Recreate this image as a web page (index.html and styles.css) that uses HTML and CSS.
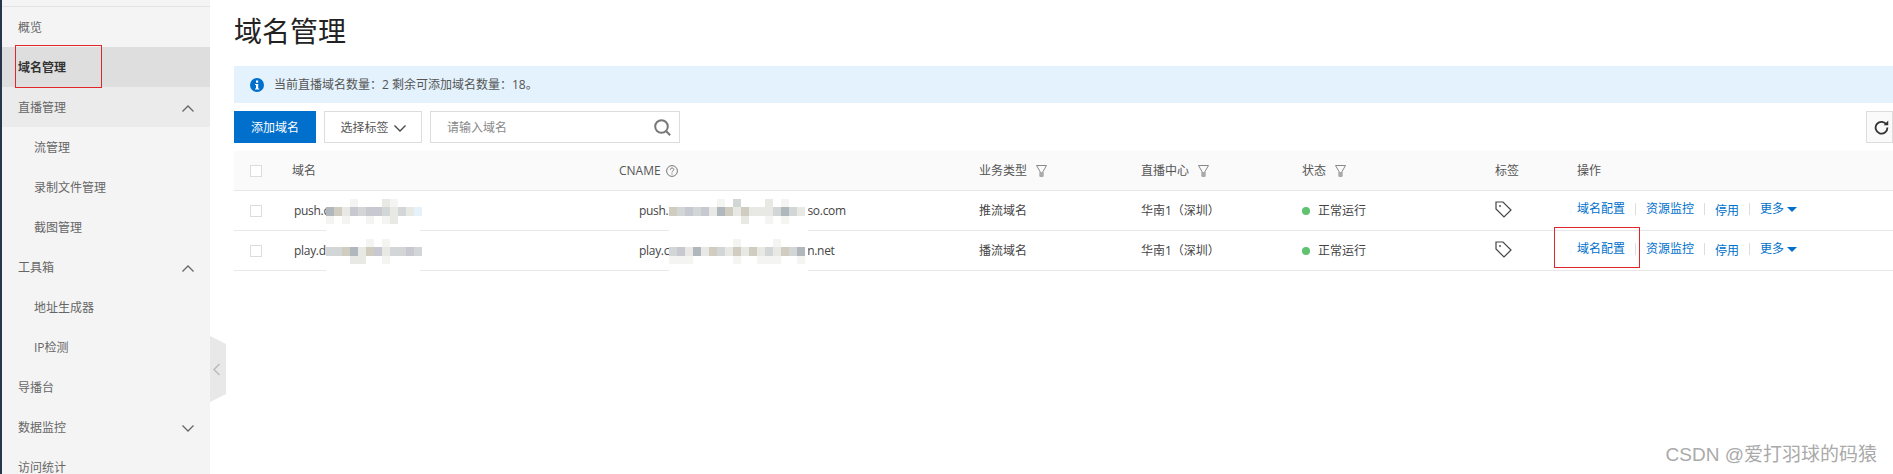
FILE: index.html
```html
<!DOCTYPE html>
<html lang="zh-CN">
<head>
<meta charset="utf-8">
<title>域名管理</title>
<link rel="stylesheet" href="styles.css">
</head>
<body>
<div class="edge"></div>
<aside class="sidebar">
  <div class="nav-item">概览</div>
  <div class="nav-item active">域名管理</div>
  <div class="nav-item open">直播管理<svg class="chev" viewBox="0 0 12 7"><path d="M0.5 6.5 6 1l5.5 5.5"/></svg></div>
  <div class="nav-item sub">流管理</div>
  <div class="nav-item sub">录制文件管理</div>
  <div class="nav-item sub">截图管理</div>
  <div class="nav-item">工具箱<svg class="chev" viewBox="0 0 12 7"><path d="M0.5 6.5 6 1l5.5 5.5"/></svg></div>
  <div class="nav-item sub">地址生成器</div>
  <div class="nav-item sub">IP检测</div>
  <div class="nav-item">导播台</div>
  <div class="nav-item">数据监控<svg class="chev" viewBox="0 0 12 7"><path d="M0.5 0.5 6 6l5.5-5.5"/></svg></div>
  <div class="nav-item">访问统计</div>
  <svg class="collapse" viewBox="0 0 16 66"><path class="collapse-bg" d="M0 0 16 8V58L0 66Z"/><path class="collapse-arrow" d="M9.5 28 4 33.500 9.500 39"/></svg>
</aside>
<main class="main">
  <h1 class="title">域名管理</h1>
  <div class="notice">
    <svg class="info" viewBox="0 0 14 14"><circle cx="7" cy="7" r="7"/><rect x="6" y="2.500" width="2.200" height="2.200"/><path d="M5 6h3.200v4.500H9.200v1H5v-1h1V7H5z"/></svg>
    <span>当前直播域名数量：2 剩余可添加域名数量：18。</span>
  </div>
  <div class="toolbar">
    <button class="btn primary">添加域名</button>
    <button class="btn select">选择标签<svg class="caret" viewBox="0 0 12 7"><path d="M0.5 0.500 6 6l5.500-5.500"/></svg></button>
    <div class="search"><span class="placeholder">请输入域名</span>
      <svg class="search-icon" viewBox="0 0 17 17"><circle cx="7.500" cy="7.500" r="6.300"/><path d="M12 12l4.200 4.200"/></svg>
    </div>
    <button class="refresh"><svg viewBox="0 0 14 14"><path d="M11.800 4.500A5.500 5.500 0 1 0 12.500 7"/><path class="fill" d="M9 4.800h4.300V.5z"/></svg></button>
  </div>
  <div class="table">
    <div class="row head">
      <div class="cell-check"><span class="check"></span></div>
      <div>域名</div>
      <div class="with-icon">CNAME<svg class="help" viewBox="0 0 12 12"><circle cx="6" cy="6" r="5.400"/><path d="M4.300 4.700C4.300 2.500 7.800 2.500 7.800 4.500 7.800 5.800 6 5.800 6 7.300"/><path d="M6 8.300v1.200"/></svg></div>
      <div class="with-icon gap">业务类型<svg class="filter" viewBox="0 0 11 12"><path d="M.5.500h10L7 6.500V11.500H4V6.500Z"/><rect class="stem" x="4" y="7" width="3" height="5"/></svg></div>
      <div class="with-icon gap">直播中心<svg class="filter" viewBox="0 0 11 12"><path d="M.5.500h10L7 6.500V11.500H4V6.500Z"/><rect class="stem" x="4" y="7" width="3" height="5"/></svg></div>
      <div class="with-icon gap">状态<svg class="filter" viewBox="0 0 11 12"><path d="M.5.500h10L7 6.500V11.500H4V6.500Z"/><rect class="stem" x="4" y="7" width="3" height="5"/></svg></div>
      <div>标签</div>
      <div>操作</div>
    </div>
    <div class="row">
      <div class="cell-check"><span class="check"></span></div>
      <div class="pad-name tight">push.c</div>
      <div class="pad-cname cname-one tight">push.<span class="cname-tail">so.com</span></div>
      <div>推流域名</div>
      <div>华南1（深圳）</div>
      <div class="status"><i class="dot"></i>正常运行</div>
      <div class="tag-cell"><svg class="tag" viewBox="0 0 17 17"><path d="M1 1h7l8 8-7 7-8-8z"/><circle cx="5" cy="5" r=".9"/></svg></div>
      <div class="ops"><a>域名配置</a><i class="sep"></i><a>资源监控</a><i class="sep"></i><a class="low">停用</a><i class="sep"></i><a>更多</a><i class="tri"></i></div>
    </div>
    <div class="row">
      <div class="cell-check"><span class="check"></span></div>
      <div class="pad-name tight">play.d</div>
      <div class="pad-cname cname-two tight">play.c<span class="cname-tail">n.net</span></div>
      <div>播流域名</div>
      <div>华南1（深圳）</div>
      <div class="status"><i class="dot"></i>正常运行</div>
      <div class="tag-cell"><svg class="tag" viewBox="0 0 17 17"><path d="M1 1h7l8 8-7 7-8-8z"/><circle cx="5" cy="5" r=".9"/></svg></div>
      <div class="ops"><a>域名配置</a><i class="sep"></i><a>资源监控</a><i class="sep"></i><a class="low">停用</a><i class="sep"></i><a>更多</a><i class="tri"></i></div>
    </div>
  </div>
</main>

<div class="patch name-patch">
  <div class="mrow top1"><i></i><i></i><i></i><i class="f"></i><i></i><i></i><i></i><i class="e"></i><i class="f"></i><i></i><i></i></div>
  <div class="mrow band1"><i class="a"></i><i class="d"></i><i class="e"></i><i class="b"></i><i class="c"></i><i class="b"></i><i class="b"></i><i class="c"></i><i class="e"></i><i class="c"></i><i class="e"></i><i class="g"></i></div>
  <div class="mrow under1"><i class="f"></i><i></i><i class="f"></i><i></i><i></i><i class="f"></i><i></i><i class="f"></i><i class="e"></i></div>
  <div class="mrow top2"><i></i><i></i><i></i><i></i><i></i><i class="f"></i><i></i><i class="f"></i></div>
  <div class="mrow band2"><i class="c"></i><i class="c"></i><i class="d"></i><i class="a"></i><i class="e"></i><i class="d"></i><i class="b"></i><i class="e"></i><i class="c"></i><i class="c"></i><i class="b"></i><i class="c"></i></div>
  <div class="mrow under2"><i></i><i></i><i></i><i class="e"></i><i class="e"></i><i></i><i></i><i class="f"></i></div>
</div>
<div class="patch cname-patch">
  <div class="mrow top1"><i></i><i></i><i></i><i></i><i></i><i></i><i class="f"></i><i></i><i class="c"></i><i></i><i></i><i></i><i class="e"></i><i></i><i class="f"></i></div>
  <div class="mrow band1"><i class="d"></i><i class="c"></i><i class="b"></i><i class="c"></i><i class="b"></i><i class="e"></i><i class="a"></i><i class="d"></i><i class="e"></i><i class="d"></i><i class="e"></i><i class="e"></i><i class="e"></i><i class="c"></i><i class="a"></i><i class="c"></i><i class="e"></i></div>
  <div class="mrow under1"><i></i><i></i><i></i><i></i><i></i><i></i><i></i><i></i><i></i><i class="e"></i><i></i><i></i><i class="f"></i><i></i><i class="f"></i></div>
  <div class="mrow top2"><i></i><i></i><i></i><i></i><i></i><i></i><i></i><i></i><i class="f"></i><i></i><i></i><i></i><i></i><i class="f"></i></div>
  <div class="mrow band2"><i class="c"></i><i class="b"></i><i class="e"></i><i class="a"></i><i class="e"></i><i class="d"></i><i class="c"></i><i class="e"></i><i class="d"></i><i class="e"></i><i class="d"></i><i class="e"></i><i class="c"></i><i class="e"></i><i class="d"></i><i class="c"></i><i class="a"></i></div>
  <div class="mrow under2"><i class="f"></i><i class="f"></i><i class="f"></i><i></i><i></i><i></i><i></i><i></i><i class="f"></i><i></i><i></i><i class="f"></i><i class="f"></i><i class="f"></i><i></i><i></i><i class="f"></i></div>
</div>

<div class="mark mark-nav"></div>
<div class="mark mark-op"></div>
<div class="watermark">CSDN @爱打羽球的码猿</div>
</body>
</html>
```
FILE: styles.css
```css
* { box-sizing: border-box; }
html, body { margin: 0; height: 474px; overflow: hidden; background: #fff; }
body {
  display: flex;
  position: relative;
  font: 12px/16px "Open Sans", "Noto Sans CJK SC", sans-serif;
  color: #444;
}
.edge { width: 2px; background: #26364d; flex: none; }

.sidebar {
  width: 208px;
  flex: none;
  background: #f4f4f4;
  padding-top: 7px;
  position: relative;
}
.sidebar::before {
  content: "";
  position: absolute;
  left: 0; right: 0; top: 6px;
  height: 1px;
  background: #e2e2e2;
}
.nav-item {
  height: 40px;
  display: flex;
  align-items: center;
  justify-content: space-between;
  padding: 2px 16px 0;
  color: #666;
}
.nav-item.sub { padding-left: 32px; }
.nav-item.active { background: #dedede; color: #333; font-weight: 700; }
.nav-item.open { background: #ebebeb; }
.chev { width: 12px; height: 7px; fill: none; stroke: #666; stroke-width: 1.300; }
.collapse { position: absolute; left: 208px; top: 336px; width: 16px; height: 66px; }
.collapse-bg { fill: #e8e8e8; }
.collapse-arrow { fill: none; stroke: #bbb; stroke-width: 1.500; }

.main { flex: 1; min-width: 0; padding-left: 24px; }
.title { margin: 0; height: 66px; font-size: 28px; line-height: 62px; font-weight: 400; color: #222; }
.notice {
  height: 37px;
  background: #e3f2fd;
  display: flex;
  align-items: center;
  padding-left: 16px;
  color: #555;
}
.info { width: 14px; height: 14px; margin-right: 10px; }
.info circle { fill: #0070cc; }
.info rect, .info path { fill: #fff; }

.toolbar { display: flex; margin-top: 8px; height: 32px; gap: 8px; }
.btn, .refresh {
  font: inherit;
  height: 32px;
  padding: 2px 0 0;
  border: 1px solid #ddd;
  background: #fff;
  color: #555;
  display: flex;
  align-items: center;
  justify-content: center;
}
.btn.primary { width: 82px; background: #0070cc; border-color: #0070cc; color: #fff; }
.btn.select { width: 98px; gap: 5px; }
.caret { width: 12px; height: 7px; fill: none; stroke: #444; stroke-width: 1.300; }
.search {
  width: 250px;
  border: 1px solid #ddd;
  display: flex;
  align-items: center;
  justify-content: space-between;
  padding: 2px 8px 0 16px;
}
.placeholder { color: #888; }
.search-icon { width: 17px; height: 17px; margin-top: -2px; fill: none; stroke: #777; stroke-width: 2; }
.refresh { margin-left: auto; width: 27px; background: #fafafa; justify-content: flex-start; padding: 0 0 0 7px; }
.refresh svg { width: 15px; height: 15px; fill: none; stroke: #333; stroke-width: 1.700; }
.refresh .fill { fill: #333; stroke: none; }

.table { margin-top: 8px; }
.row {
  display: grid;
  grid-template-columns: 58px 327px 360px 162px 161px 193px 82px 1fr;
  height: 40px;
  align-items: center;
  border-bottom: 1px solid #e8e8e8;
  color: #444;
}
.row.head { background: #fafafa; color: #555; }
.cell-check { padding-left: 16px; display: flex; }
.check { width: 12px; height: 12px; border: 1px solid #ddd; background: #fff; }
.with-icon { display: flex; align-items: center; }
.with-icon.gap .filter { margin-left: 9px; }
.help { width: 12px; height: 12px; margin-left: 5px; fill: none; stroke: #777; stroke-width: 1; }
.filter { width: 11px; height: 12px; fill: none; stroke: #888; stroke-width: 1; }
.filter .stem { fill: #aaa; stroke: none; }
.tight { letter-spacing: -0.3px; }
.pad-name { padding-left: 2px; }
.pad-cname { padding-left: 20px; display: flex; }
.cname-one .cname-tail { margin-left: 139px; }
.cname-two .cname-tail { margin-left: 138px; }
.status { display: flex; align-items: center; }
.dot { width: 8px; height: 8px; border-radius: 50%; background: #5ec26f; margin-right: 8px; }
.tag-cell { display: flex; }
.tag { width: 17px; height: 17px; margin-top: -3px; fill: none; stroke: #444; stroke-width: 1.200; }
.tag circle { fill: #444; stroke: none; }
.ops { display: flex; align-items: center; margin-top: -3px; }
.ops a { color: #0070cc; }
.ops a.low { position: relative; top: 2px; }
.sep { width: 1px; height: 12px; background: #ddd; margin: 0 10px; }
.tri {
  margin-left: 3px;
  border-style: solid;
  border-width: 5px 5px 0;
  border-color: #0070cc transparent transparent;
}

.patch { position: absolute; top: 191px; height: 81px; background: #fff; }
.name-patch { left: 326px; width: 94px; }
.cname-patch { left: 669px; width: 139px; }
.mrow { position: absolute; left: 0; display: flex; height: 8px; }
.mrow i { width: 8px; flex: none; }
.top1 { top: 8px; }
.band1 { top: 16px; height: 9px; }
.under1 { top: 25px; }
.top2 { top: 48px; }
.band2 { top: 56px; height: 9px; }
.under2 { top: 65px; }
.a { background: #b0b8bd; }
.b { background: #c8c8d0; }
.c { background: #d2d6d6; }
.d { background: #d0ccc0; }
.e { background: #e8e8e4; }
.f { background: #f4f4f2; }
.g { background: #e6f2fa; }

.mark { position: absolute; border: 1px solid #e0252b; }
.mark-nav { left: 15px; top: 45px; width: 87px; height: 43px; }
.mark-op { left: 1554px; top: 227px; width: 86px; height: 41px; }
.watermark {
  position: absolute;
  right: 16px;
  top: 444px;
  font: 19px/22px "Liberation Sans", "Noto Sans CJK SC", sans-serif;
  color: #aaa;
}
```
